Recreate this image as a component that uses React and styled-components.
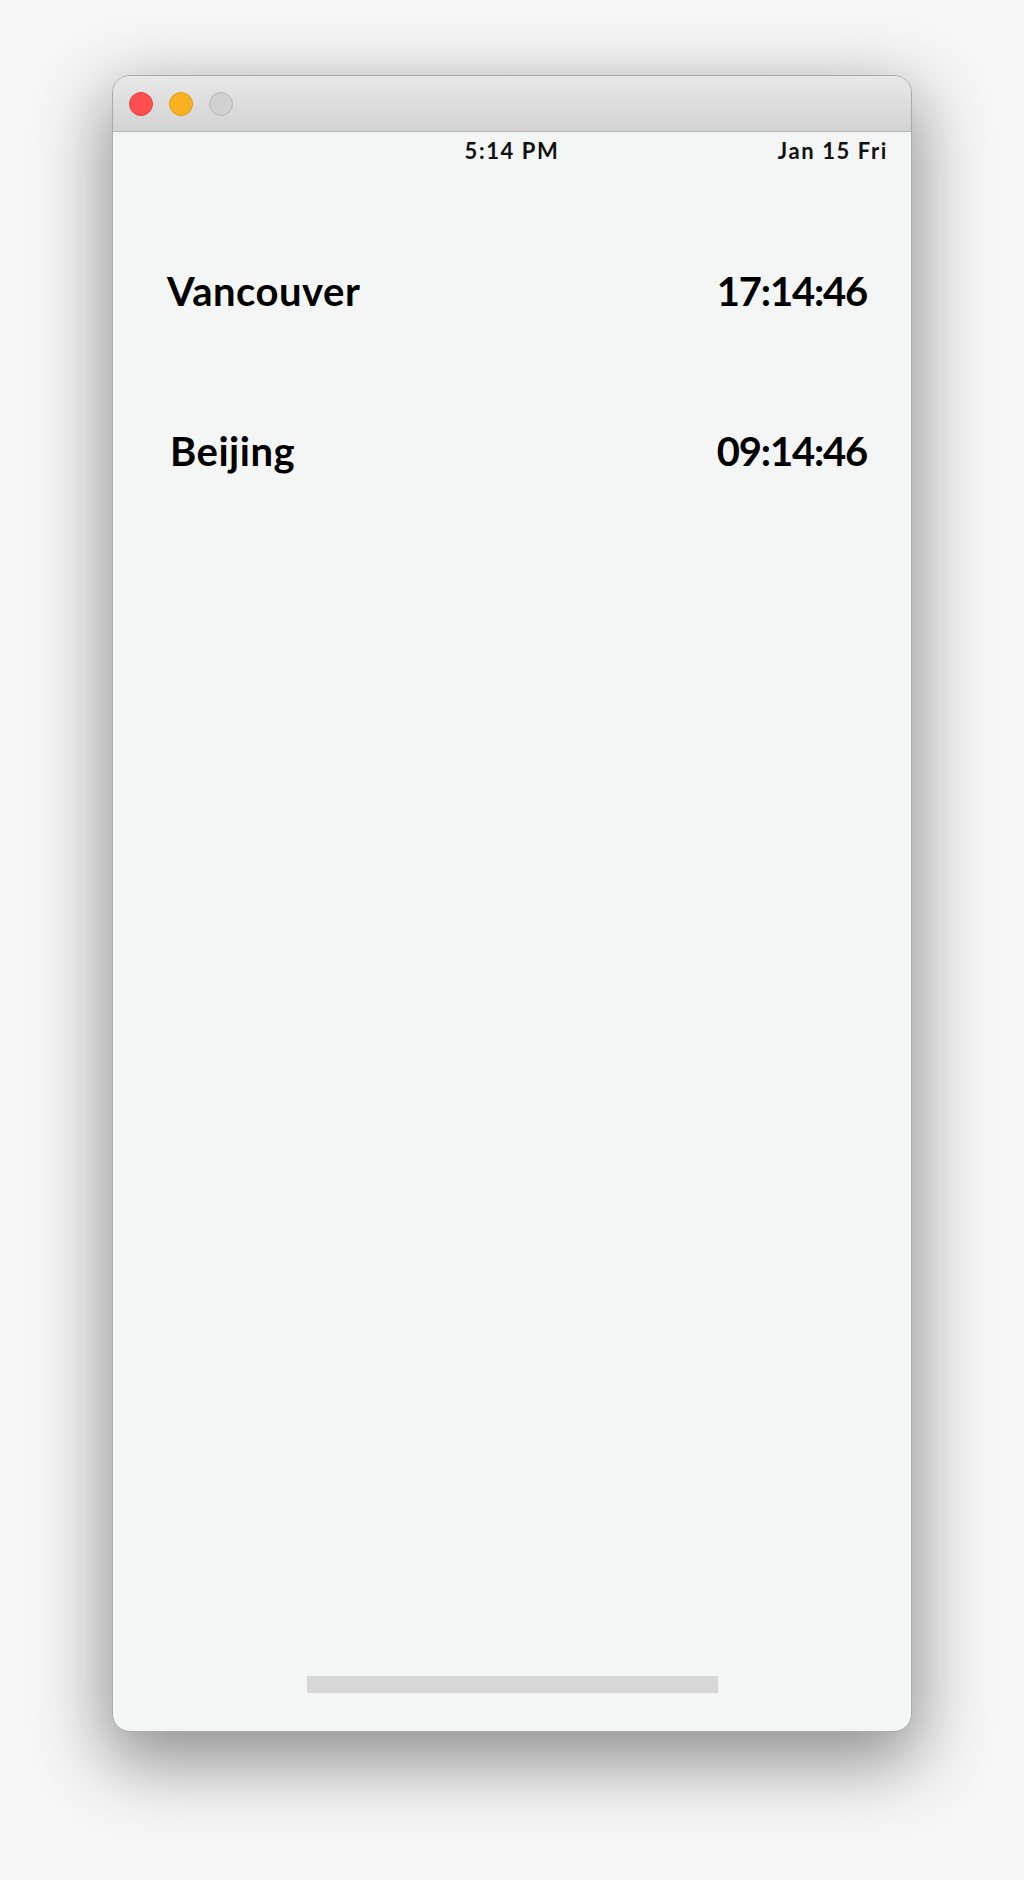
import React from "react";
import styled, { createGlobalStyle } from "styled-components";

const Global = createGlobalStyle`
  html, body { margin: 0; padding: 0; background: #f5f6f5; }
  body { font-family: Futura, "Lato", "Noto Sans", sans-serif; }
`;

const Stage = styled.div`
  padding: 75px 112px 148px 112px;
`;

const Window = styled.div`
  width: 800px;
  height: 1657px;
  box-sizing: border-box;
  display: flex;
  flex-direction: column;
  background: #f4f6f5;
  border: 1px solid #a9a9a9;
  border-radius: 18px;
  overflow: hidden;
  box-shadow: 0 24px 70px 6px rgba(0, 0, 0, 0.42);
`;

const TitleBar = styled.div`
  height: 55px;
  flex: none;
  display: flex;
  align-items: center;
  gap: 16px;
  padding-left: 16px;
  background: linear-gradient(#e8e8e8, #d3d3d3);
  border-bottom: 1px solid #b3b3b3;
`;

const Light = styled.span`
  width: 24px;
  height: 24px;
  border-radius: 50%;
  box-sizing: border-box;
  background: ${(p) => p.$color};
  border: 1px solid ${(p) => p.$edge};
`;

const StatusBar = styled.div`
  position: relative;
  height: 36px;
  display: flex;
  align-items: center;
  justify-content: flex-end;
  padding-right: 23px;
  font-size: 22px;
  font-weight: 700;
  letter-spacing: 1.6px;
  color: #111;
`;

const Clock = styled.span`
  position: absolute;
  left: 0;
  right: 0;
  text-align: center;
`;

const DateText = styled.span`
  position: relative;
`;

const List = styled.div`
  display: flex;
  flex-direction: column;
  padding: 103px 44px 0 0;
  gap: 120px;
`;

const Row = styled.div`
  display: flex;
  justify-content: space-between;
  align-items: baseline;
  padding-left: ${(p) => p.$indent}px;
  font-size: 40px;
  font-weight: 700;
  color: #000;
  line-height: 40px;
`;

const City = styled.span`
  letter-spacing: 0.5px;
`;

const Time = styled.span`
  letter-spacing: -1.2px;
`;

const Spacer = styled.div`
  flex: 1;
`;

const HomeBar = styled.div`
  align-self: center;
  width: 411px;
  height: 17px;
  background: #d6d7d6;
  margin-bottom: 38px;
`;

const cities = [
  { name: "Vancouver", time: "17:14:46", indent: 54 },
  { name: "Beijing", time: "09:14:46", indent: 57 },
];

export default function App() {
  return (
    <Stage>
      <Global />
      <Window>
        <TitleBar>
          <Light $color="#fd4f4f" $edge="#e0443f" />
          <Light $color="#f8b121" $edge="#dd9b14" />
          <Light $color="#d1d1d1" $edge="#b4b4b4" />
        </TitleBar>
        <StatusBar>
          <Clock>5:14 PM</Clock>
          <DateText>Jan 15 Fri</DateText>
        </StatusBar>
        <List>
          {cities.map((c) => (
            <Row key={c.name} $indent={c.indent}>
              <City>{c.name}</City>
              <Time>{c.time}</Time>
            </Row>
          ))}
        </List>
        <Spacer />
        <HomeBar />
      </Window>
    </Stage>
  );
}
